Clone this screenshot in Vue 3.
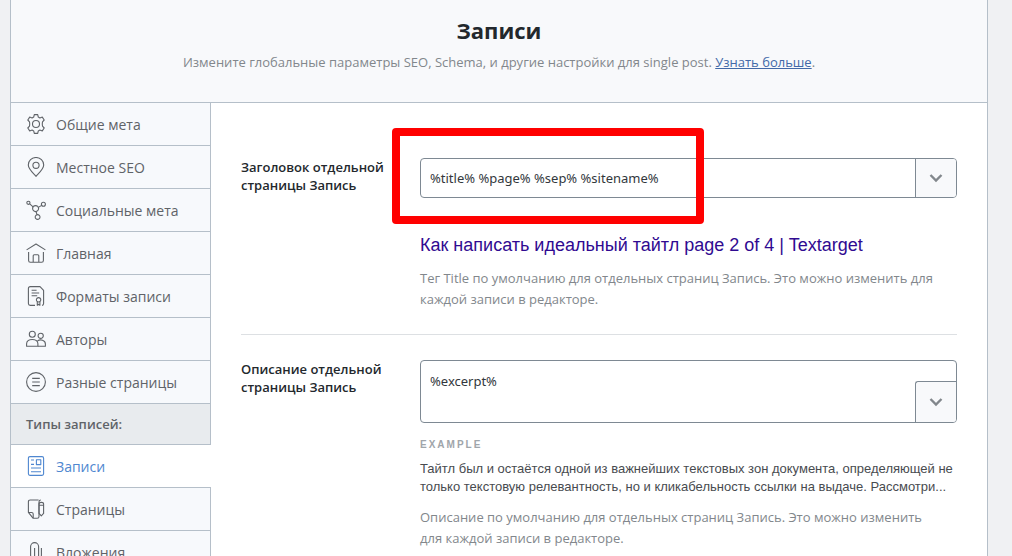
<template>
  <div class="page">
    <div class="panel">
      <header class="panel-header">
        <h1>Записи</h1>
        <p>Измените глобальные параметры SEO, Schema, и другие настройки для single post. <a href="#">Узнать больше</a>.</p>
      </header>

      <div class="panel-body">
        <nav class="tabs">
          <template v-for="tab in tabs" :key="tab.title">
            <div v-if="tab.separator" class="tab-separator">{{ tab.title }}</div>
            <a v-else href="#" class="tab" :class="{ active: tab.title === activeTab }" @click.prevent="activeTab = tab.title">
              <svg class="tab-icon" viewBox="0 0 20 20">
                <path v-for="d in tab.icon" :key="d" :d="d" />
              </svg>
              <span>{{ tab.title }}</span>
            </a>
          </template>
        </nav>

        <main class="content">
          <section class="row">
            <label class="row-label" for="post-title">Заголовок отдельной страницы Запись</label>
            <div class="row-field">
              <div class="field">
                <input id="post-title" v-model="title" type="text" class="text-input">
                <button type="button" class="dropdown" aria-label="Переменные">
                  <svg viewBox="0 0 14 10"><path d="M1.5 2 L7 7.5 L12.5 2" /></svg>
                </button>
                <div class="highlight"></div>
              </div>
              <div class="title-preview">Как написать идеальный тайтл page 2 of 4 | Textarget</div>
              <p class="description">Тег Title по умолчанию для отдельных страниц Запись. Это можно изменить для каждой записи в редакторе.</p>
            </div>
          </section>

          <section class="row">
            <label class="row-label" for="post-description">Описание отдельной страницы Запись</label>
            <div class="row-field">
              <div class="field area">
                <textarea id="post-description" v-model="description" class="text-input"></textarea>
                <button type="button" class="dropdown" aria-label="Переменные">
                  <svg viewBox="0 0 14 10"><path d="M1.5 2 L7 7.5 L12.5 2" /></svg>
                </button>
              </div>
              <div class="example-title">EXAMPLE</div>
              <div class="example-text">Тайтл был и остаётся одной из важнейших текстовых зон документа, определяющей не только текстовую релевантность, но и кликабельность ссылки на выдаче. Рассмотри...</div>
              <p class="description">Описание по умолчанию для отдельных страниц Запись. Это можно изменить для каждой записи в редакторе.</p>
            </div>
          </section>
        </main>
      </div>
    </div>
  </div>
</template>

<script setup>
import { ref } from 'vue';

const activeTab = ref('Записи');
const title = ref('%title% %page% %sep% %sitename%');
const description = ref('%excerpt%');

const tabs = [
  {
    title: 'Общие мета',
    icon: [
      'M8.3 .6h3.4l.6 2.5 1.6 .9 2.4-.9 1.9 2.9-1.7 1.8q-.5 2.2 0 4.4l1.7 1.8-1.9 2.9-2.4-.9-1.6 .9-.6 2.5H8.3l-.6-2.5-1.6-.9-2.4 .9-1.9-2.9 1.7-1.8q.5-2.2 0-4.4L1.8 6l1.9-2.9 2.4 .9 1.6-.9z',
      'M6.5 10a3.5 3.5 0 1 0 7 0a3.5 3.5 0 1 0-7 0',
    ],
  },
  {
    title: 'Местное SEO',
    icon: [
      'M10 19.4C8.5 17.5 2.3 12.2 2.3 8a7.7 7.5 0 0 1 15.4 0c0 4.2-6.2 9.5-7.7 11.4z',
      'M6.9 8.3a3.1 3.1 0 1 0 6.2 0a3.1 3.1 0 1 0-6.2 0',
    ],
  },
  {
    title: 'Социальные мета',
    icon: [
      'M6.6 8.6a3 3 0 1 0 6 0a3 3 0 1 0-6 0',
      'M.8 2.8a1.6 1.6 0 1 0 3.2 0a1.6 1.6 0 1 0-3.2 0',
      'M15.4 4.3a2 2 0 1 0 4 0a2 2 0 1 0-4 0',
      'M9.2 17a2.4 2.4 0 1 0 4.8 0a2.4 2.4 0 1 0-4.8 0',
      'M3.7 3.9l3.4 2.9M12.4 7.4l3.2-2M10.1 11.6l.9 3',
    ],
  },
  {
    title: 'Главная',
    icon: ['M.6 6.9L10 1l9.4 5.9', 'M2.6 9v8.4q0 1.8 1.8 1.8h11.2q1.8 0 1.8-1.8V9', 'M7.2 19v-6.2q0-1 1-1h3.6q1 0 1 1V19'],
  },
  {
    title: 'Форматы записи',
    icon: [
      'M9 19.4H4.3q-1.9 0-1.9-1.9V2.5Q2.4.6 4.3.6H14l3.6 3.8v13.1q0 1.9-1.6 1.9',
      'M5.6 4.3h5M5.6 7h7.6M5.6 9.7h5.6',
      'M10.4 13.8a2.2 2.2 0 1 0 4.4 0a2.2 2.2 0 1 0-4.4 0',
      'M11.3 15.8v3.4l1.3-1 1.3 1v-3.4',
    ],
  },
  {
    title: 'Авторы',
    icon: [
      'M3.3 5.2a3 3 0 1 0 6 0a3 3 0 1 0-6 0',
      'M12.1 6.8a2.6 2.6 0 1 0 5.2 0a2.6 2.6 0 1 0-5.2 0',
      'M.6 17.2v-2.4c0-5.8 11.3-5.8 11.3 0v2.4z',
      'M11.3 12.2c3-2.5 8.1-1.2 8.1 2.8v2.2h-7.5',
    ],
  },
  {
    title: 'Разные страницы',
    icon: ['M.6 10a9.4 9.4 0 1 0 18.8 0a9.4 9.4 0 1 0-18.8 0', 'M6.2 6.4h7.6M6.2 10h7.6M6.2 13.6h7.6'],
  },
  { title: 'Типы записей:', separator: true },
  {
    title: 'Записи',
    icon: [
      'M2.4 2.2Q2.4.6 4 .6h12q1.6 0 1.6 1.6v15.6q0 1.6-1.6 1.6H4q-1.6 0-1.6-1.6z',
      'M10.4 3.8h4.4v4.8h-4.4z',
      'M5 4h3M5 8.4h3M5 12h10M5 15.8h10',
    ],
  },
  {
    title: 'Страницы',
    icon: [
      'M12.6 1H4.2Q2.4 1 2.4 2.8v10.6l4.8 5.9h4q1.8 0 1.8-1.8V3.4Q13 1 14.8 1',
      'M2.6 13.5h3q1.6 0 1.6 1.6v4',
      'M13 6.2V5q0-1.6 2.3-1.6T17.6 5v9.4l-2.3 2.4-2.3-2.4zM13 6.2h4.6',
    ],
  },
  {
    title: 'Вложения',
    icon: ['M4.6 13V4.6a4 4 0 0 1 8 0v9.8a2 2 0 0 1-4 0V6', 'M4.6 13a5.4 5.4 0 0 0 10.8 0V6'],
  },
];
</script>

<style>
body {
  margin: 0;
  background: #f0f1f3;
}
</style>

<style scoped>
.page {
  height: 100vh;
  overflow: hidden;
  font-family: "Open Sans", "Noto Sans", sans-serif;
  font-size: 13px;
  color: #23282d;
}

.page * {
  box-sizing: border-box;
}

.panel {
  margin: 0 24px 0 10px;
  border: 1px solid #b5bfc9;
  border-top: 0;
  background: #fff;
}

.panel-header {
  padding: 14px 20px 30px;
  background: #f8f9fb;
  border-bottom: 1px solid #b5bfc9;
  text-align: center;
}

.panel-header h1 {
  margin: 0 0 6px;
  font-size: 22px;
  line-height: 32px;
  font-weight: 700;
}

.panel-header p {
  margin: 0;
  line-height: 20px;
  color: #82878c;
}

.panel-header a {
  color: #4269a8;
}

.panel-body {
  display: flex;
}

.tabs {
  flex: 0 0 200px;
  border-right: 1px solid #b5bfc9;
  background: #f7f9fc;
}

.tab {
  display: flex;
  align-items: center;
  gap: 10px;
  height: 43px;
  padding-left: 15px;
  border-bottom: 1px solid #b5bfc9;
  font-size: 14px;
  color: #5f6368;
  text-decoration: none;
}

.tab.active {
  margin-right: -1px;
  background: #fff;
  color: #4f87d0;
}

.tab-icon {
  width: 20px;
  height: 20px;
  fill: none;
  stroke: currentColor;
  stroke-width: 1.1;
  stroke-linejoin: round;
}

.tab-separator {
  padding: 0 15px;
  border-bottom: 1px solid #b5bfc9;
  background: #e8ebee;
  font-weight: 600;
  line-height: 40px;
  color: #5f6368;
}

.content {
  flex: 1;
  min-width: 0;
  padding: 29px 30px;
}

.row {
  display: flex;
  padding: 26px 0 24px;
}

.row + .row {
  border-top: 1px solid #dde0e3;
  padding-top: 25px;
}

.row-label {
  flex: 0 0 179px;
  padding-right: 30px;
  font-weight: 600;
  line-height: 18px;
}

.row-field {
  flex: 1;
  min-width: 0;
}

.field {
  position: relative;
  display: flex;
  height: 40px;
  border: 1px solid #7e8993;
  border-radius: 4px;
}

.text-input {
  flex: 1;
  min-width: 0;
  margin: 0;
  padding: 0 9px;
  border: 0;
  outline: 0;
  background: transparent;
  font-family: "Noto Sans", "Open Sans", sans-serif;
  font-size: 13px;
  color: #32373c;
}

.dropdown {
  width: 41px;
  padding: 0;
  border: 0;
  border-left: 1px solid #7e8993;
  border-radius: 0 3px 3px 0;
  background: #f8f9fb;
}

.dropdown svg {
  display: block;
  width: 14px;
  height: 10px;
  margin: 0 auto;
  fill: none;
  stroke: #82878c;
  stroke-width: 2.4;
}

.field.area {
  height: 63px;
}

.area .text-input {
  padding: 10px 9px;
  line-height: 20px;
  resize: none;
}

.area .dropdown {
  position: absolute;
  right: 0;
  bottom: 0;
  height: 41px;
  border-top: 1px solid #7e8993;
  border-radius: 3px 0 3px 0;
}

.highlight {
  position: absolute;
  top: -31px;
  left: -29px;
  width: 312px;
  height: 96px;
  border: 8px solid #f00;
  border-radius: 4px;
  pointer-events: none;
}

.title-preview {
  margin: 35px 0 11px;
  font-family: "Liberation Sans", Arial, sans-serif;
  font-size: 18px;
  line-height: 24px;
  color: #300a91;
}

.description {
  margin: 0;
  padding-right: 16px;
  line-height: 21px;
  color: #82878c;
}

.example-title {
  margin-top: 15px;
  font-family: "Liberation Sans", Arial, sans-serif;
  font-size: 10px;
  font-weight: 700;
  letter-spacing: 2px;
  line-height: 14px;
  color: #a0a5aa;
}

.example-text {
  margin: 8px 0 11px;
  font-family: "Liberation Sans", Arial, sans-serif;
  line-height: 18px;
  color: #484b4f;
}
</style>
